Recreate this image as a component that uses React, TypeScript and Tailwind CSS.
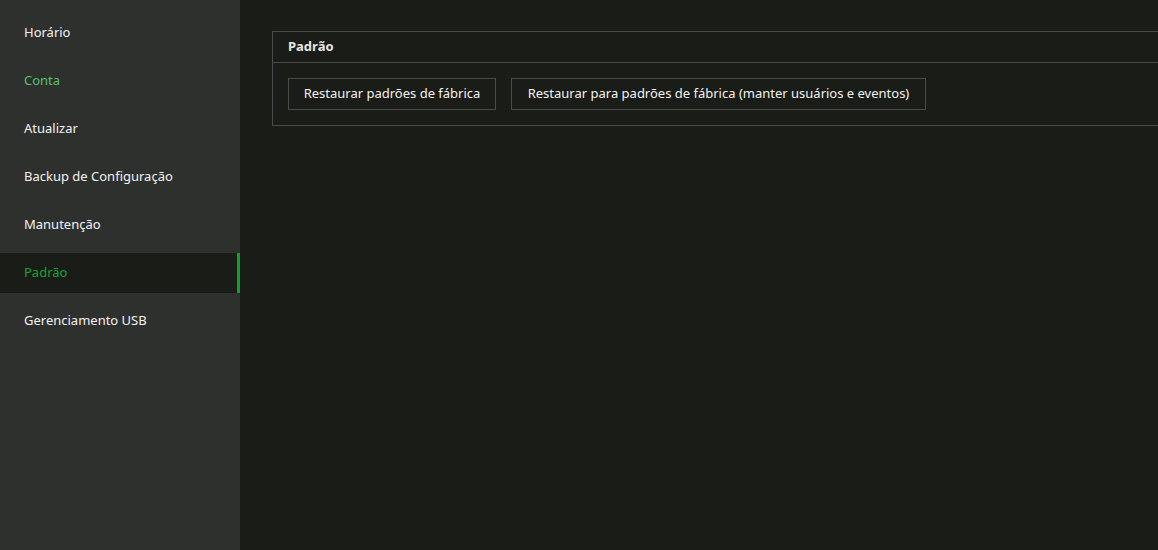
const items = [
  { label: 'Horário' },
  { label: 'Conta', hover: true },
  { label: 'Atualizar' },
  { label: 'Backup de Configuração' },
  { label: 'Manutenção' },
  { label: 'Padrão', active: true },
  { label: 'Gerenciamento USB' },
];

export default function App() {
  return (
    <div
      className="flex h-[550px] w-[1158px] overflow-hidden bg-[#1a1c17] text-[13px] text-[#f2f2f2]"
      style={{ fontFamily: '"Noto Sans", "Open Sans", sans-serif' }}
    >
      {/* sidebar */}
      <aside className="flex w-[240px] shrink-0 flex-col gap-2 bg-[#2e302e] pt-[13px]">
        {items.map((it) => (
          <div
            key={it.label}
            className={
              it.active
                ? 'flex h-10 items-center border-r-[3px] border-[#0ea42c] bg-[#1a1c17] pl-6 text-[#18a13a]'
                : it.hover
                  ? 'flex h-10 items-center pl-6 text-[#55c06e]'
                  : 'flex h-10 items-center pl-6 text-[#f2f2f2]'
            }
          >
            {it.label}
          </div>
        ))}
      </aside>

      {/* content */}
      <main className="flex-1 overflow-hidden pl-8 pt-[31px]">
        <section className="w-[1000px] border border-[#4a4a4a]">
          <div className="flex h-[31px] items-center border-b border-[#4a4a4a] px-[15px] text-[13px] font-bold text-[#e6e6e6]">
            Padrão
          </div>
          <div className="flex gap-[15px] px-[15px] py-[15px]">
            <button className="h-8 w-[208px] border border-[#4a4a4a] bg-[#1a1c17] text-[13px] text-[#f2f2f2]">
              Restaurar padrões de fábrica
            </button>
            <button className="h-8 w-[415px] border border-[#4a4a4a] bg-[#1a1c17] text-[13px] text-[#f2f2f2]">
              Restaurar para padrões de fábrica (manter usuários e eventos)
            </button>
          </div>
        </section>
      </main>
    </div>
  );
}
